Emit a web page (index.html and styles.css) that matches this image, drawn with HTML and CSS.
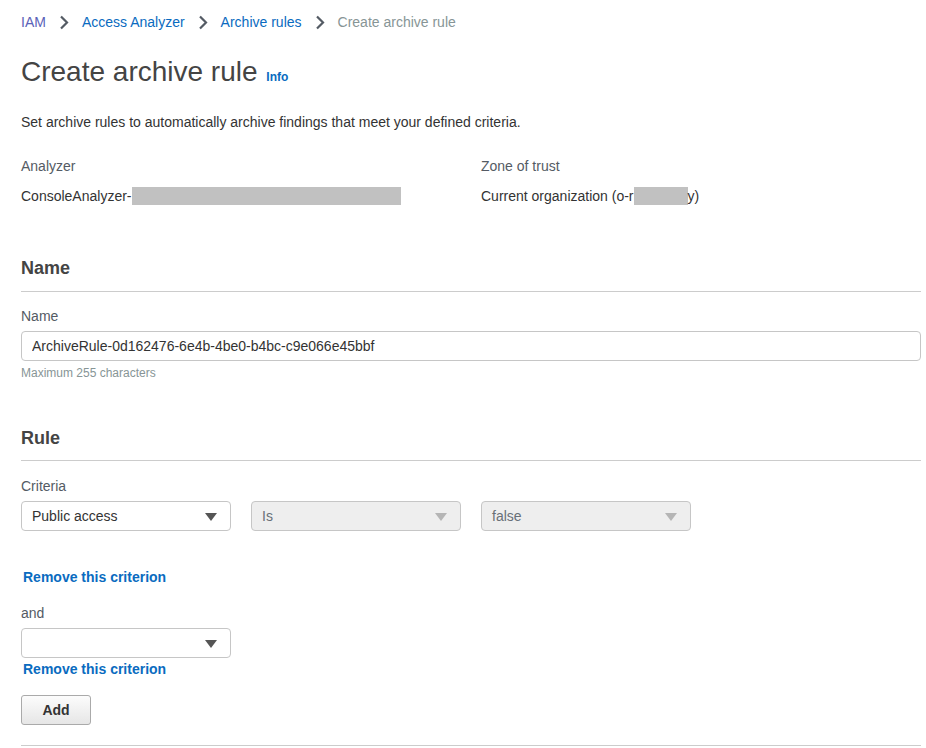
FILE: index.html
```html
<!DOCTYPE html>
<html lang="en">

<head>
    <meta charset="UTF-8">
    <title>Create archive rule</title>
    <link rel="stylesheet" href="styles.css">
</head>

<body>
    <div class="page">
        <!-- хлебные крошки -->
        <div class="crumbs">
            <a href="#">IAM</a>
            <svg class="chev" width="10" height="15" viewBox="0 0 10 15"><path d="M2 1.5 L8 7.5 L2 13.5" fill="none" stroke="#545b64" stroke-width="2.2"/></svg>
            <a href="#">Access Analyzer</a>
            <svg class="chev" width="10" height="15" viewBox="0 0 10 15"><path d="M2 1.5 L8 7.5 L2 13.5" fill="none" stroke="#545b64" stroke-width="2.2"/></svg>
            <a href="#">Archive rules</a>
            <svg class="chev" width="10" height="15" viewBox="0 0 10 15"><path d="M2 1.5 L8 7.5 L2 13.5" fill="none" stroke="#545b64" stroke-width="2.2"/></svg>
            <span class="current">Create archive rule</span>
        </div>

        <h1>Create archive rule <a href="#" class="info">Info</a></h1>
        <p class="desc">Set archive rules to automatically archive findings that meet your defined criteria.</p>

        <div class="details">
            <div class="col">
                <div class="label">Analyzer</div>
                <div class="value">ConsoleAnalyzer-<span class="redact wide"></span></div>
            </div>
            <div class="col">
                <div class="label">Zone of trust</div>
                <div class="value">Current organization (o-r<span class="redact small"></span>y)</div>
            </div>
        </div>

        <!-- Name -->
        <h2>Name</h2>
        <div class="label field-label">Name</div>
        <input type="text" class="in" value="ArchiveRule-0d162476-6e4b-4be0-b4bc-c9e066e45bbf">
        <div class="hint">Maximum 255 characters</div>

        <!-- Rule -->
        <h2 class="rule-head">Rule</h2>
        <div class="label field-label">Criteria</div>
        <div class="criteria">
            <div class="sel">Public access<span class="arrow"></span></div>
            <div class="sel disabled">Is<span class="arrow"></span></div>
            <div class="sel disabled">false<span class="arrow"></span></div>
        </div>
        <a href="#" class="remove first">Remove this criterion</a>

        <div class="label and">and</div>
        <div class="criteria">
            <div class="sel"><span class="arrow"></span></div>
        </div>
        <a href="#" class="remove second">Remove this criterion</a>

        <button class="add">Add</button>
        <div class="bottom-line"></div>
    </div>
</body>

</html>
```

FILE: styles.css
```css
body {
    font-family: "Liberation Sans", Arial, sans-serif;
    font-size: 14px;
    color: #444;
    margin: 0;
}

.page {
    width: 900px;
    margin-left: 21px;
    padding-top: 12px;
}

a {
    color: #0a6bc0;
    text-decoration: none;
}

.crumbs {
    display: flex;
    align-items: center;
    height: 20px;
    line-height: 20px;
}

.crumbs .chev {
    margin: 0 13px 0 13px;
}

.crumbs a:first-child {
    color: #5a62b8;
}

.crumbs .current {
    color: #879596;
}

h1 {
    font-size: 28px;
    font-weight: normal;
    line-height: 34px;
    margin: 23px 0 0;
    color: #444;
}

h1 .info {
    font-size: 12px;
    font-weight: bold;
    margin-left: 1px;
}

.desc {
    line-height: 20px;
    margin: 18px 0 0;
    color: #333;
}

.details {
    display: flex;
    margin-top: 24px;
}

.details .col {
    width: 460px;
    flex-shrink: 0;
}

.details .col + .col {
    width: 440px;
}

.label {
    line-height: 20px;
    color: #545b64;
}

.value {
    line-height: 20px;
    margin-top: 10px;
    color: #333;
    display: flex;
    align-items: center;
}

.redact {
    display: inline-block;
    height: 18px;
    background-color: #c1c1c1;
}

.redact.wide {
    width: 269px;
}

.redact.small {
    width: 54px;
}

h2 {
    font-size: 18px;
    font-weight: bold;
    line-height: 24px;
    margin: 50px 0 0;
    padding-bottom: 11px;
    border-bottom: 1px solid #ccc;
    color: #444;
}

h2.rule-head {
    margin-top: 45px;
    padding-bottom: 10px;
}

.field-label {
    margin-top: 14px;
}

.in {
    display: block;
    width: 100%;
    height: 30px;
    margin-top: 5px;
    padding: 0 10px;
    font-family: inherit;
    font-size: 14px;
    color: #333;
    border: 1px solid #c6c6c6;
    border-radius: 4px;
    box-sizing: border-box;
}

.hint {
    font-size: 12px;
    line-height: 16px;
    margin-top: 4px;
    color: #879596;
}

.rule-head + .field-label {
    margin-top: 15px;
}

.criteria {
    display: flex;
    gap: 20px;
    margin-top: 5px;
}

.sel {
    position: relative;
    width: 210px;
    height: 30px;
    line-height: 28px;
    padding: 0 10px;
    border: 1px solid #c6c6c6;
    border-radius: 4px;
    box-sizing: border-box;
    color: #333;
    background-color: #fff;
}

.sel.disabled {
    background-color: #eeeeee;
    color: #687078;
}

.sel .arrow {
    position: absolute;
    right: 13px;
    top: 11px;
    width: 0;
    height: 0;
    border-left: 6px solid transparent;
    border-right: 6px solid transparent;
    border-top: 8px solid #555;
}

.sel.disabled .arrow {
    border-top-color: #b5b5b5;
}

.remove {
    display: block;
    width: max-content;
    font-weight: bold;
    line-height: 20px;
    margin-left: 2px;
}

.remove.first {
    margin-top: 36px;
}

.remove.second {
    margin-top: 1px;
}

.and {
    margin-top: 16px;
}

.add {
    display: block;
    width: 70px;
    height: 30px;
    margin-top: 16px;
    font-family: inherit;
    font-size: 14px;
    font-weight: bold;
    color: #333;
    background: linear-gradient(#fcfcfc, #e6e6e6);
    border: 1px solid #aaa;
    border-radius: 3px;
    cursor: pointer;
}

.bottom-line {
    margin-top: 20px;
    border-top: 1px solid #ccc;
}
```
